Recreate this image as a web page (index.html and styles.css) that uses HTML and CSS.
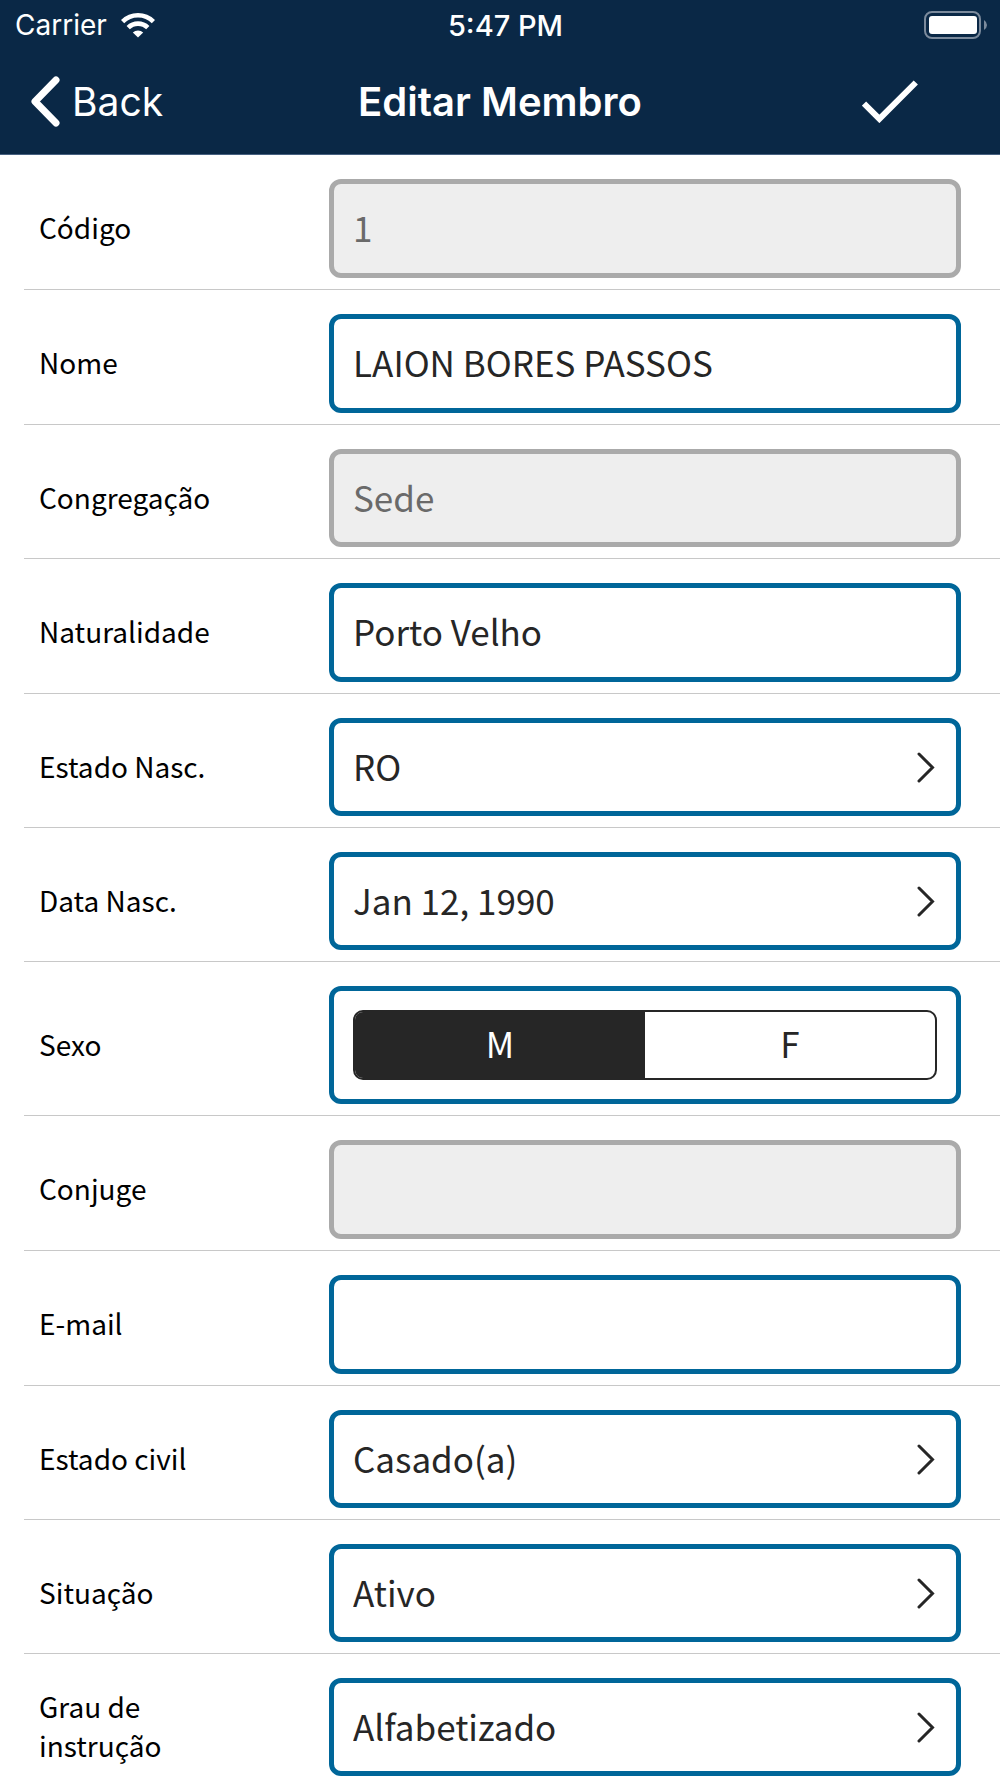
FILE: index.html
```html
<!DOCTYPE html>
<html lang="pt-BR">
<head>
<meta charset="utf-8">
<meta name="viewport" content="width=device-width, initial-scale=1">
<title>Editar Membro</title>
<link rel="stylesheet" href="styles.css">
</head>
<body>
<header class="header">
  <div class="status">
    <div class="carrier">
      <span>Carrier</span>
      <svg class="wifi" viewBox="0 0 34 25" aria-hidden="true">
        <g fill="none" stroke="#fff" stroke-width="4.6">
          <path d="M1.6 8.6A22 22 0 0 1 32.4 8.6"/>
          <path d="M7.2 14.6A14 14 0 0 1 26.8 14.6"/>
        </g>
        <path fill="#fff" d="M17 24.6 11.800 19.500A7.500 7.500 0 0 1 22.200 19.500Z"/>
      </svg>
    </div>
    <time class="clock">5:47 PM</time>
    <svg class="battery" viewBox="0 0 64 28" aria-label="Bateria cheia" role="img">
      <rect x="1" y="1" width="55" height="26" rx="7" fill="none" stroke="#7b8a9c" stroke-width="2"/>
      <rect x="5" y="5" width="48" height="18" rx="3" fill="#fff"/>
      <path d="M60 9q3 2 3 5t-3 5z" fill="#7b8a9c"/>
    </svg>
  </div>
  <nav class="nav">
    <a class="back" href="#">
      <svg class="back-icon" viewBox="0 0 30 51" aria-hidden="true"><path d="M26 4 5 25.500 26 47" fill="none" stroke="#fff" stroke-width="7" stroke-linecap="round" stroke-linejoin="round"/></svg>
      <span>Back</span>
    </a>
    <h1 class="title">Editar Membro</h1>
    <button class="save" type="submit" form="member" aria-label="Salvar">
      <svg class="save-icon" viewBox="0 0 56 43" aria-hidden="true"><path d="M2 23.500 17.400 38.900 53.800 2.500" fill="none" stroke="#fff" stroke-width="6"/></svg>
    </button>
  </nav>
</header>
<main class="content">
  <form class="form" id="member">
    <div class="row"><label class="label" for="codigo">Código</label><input class="field" id="codigo" value="1" disabled></div>
    <div class="row"><label class="label" for="nome">Nome</label><input class="field" id="nome" value="LAION BORES PASSOS"></div>
    <div class="row"><label class="label" for="congregacao">Congregação</label><select class="field field-pick" id="congregacao" disabled><option>Sede</option></select></div>
    <div class="row"><label class="label" for="naturalidade">Naturalidade</label><input class="field" id="naturalidade" value="Porto Velho"></div>
    <div class="row"><label class="label" for="estado">Estado Nasc.</label>
      <div class="picker"><select class="field field-pick" id="estado"><option>RO</option></select><svg class="chevron" viewBox="0 0 18 31" aria-hidden="true"><path d="M2 2 15.500 15.500 2 29"/></svg></div></div>
    <div class="row"><label class="label" for="data">Data Nasc.</label>
      <div class="picker"><button class="field field-pick" id="data" type="button">Jan 12, 1990</button><svg class="chevron" viewBox="0 0 18 31" aria-hidden="true"><path d="M2 2 15.500 15.500 2 29"/></svg></div></div>
    <div class="row" role="radiogroup" aria-labelledby="sexo"><span class="label" id="sexo">Sexo</span>
      <div class="field segment-box"><div class="segment">
        <input class="segment-input" type="radio" name="sexo" id="sexo-m" checked><label class="segment-item" for="sexo-m">M</label>
        <input class="segment-input" type="radio" name="sexo" id="sexo-f"><label class="segment-item" for="sexo-f">F</label>
      </div></div></div>
    <div class="row"><label class="label" for="conjuge">Conjuge</label><input class="field" id="conjuge" disabled></div>
    <div class="row"><label class="label" for="email">E-mail</label><input class="field" id="email" type="email"></div>
    <div class="row"><label class="label" for="civil">Estado civil</label>
      <div class="picker"><select class="field field-pick" id="civil"><option>Casado(a)</option></select><svg class="chevron" viewBox="0 0 18 31" aria-hidden="true"><path d="M2 2 15.500 15.500 2 29"/></svg></div></div>
    <div class="row"><label class="label" for="situacao">Situação</label>
      <div class="picker"><select class="field field-pick" id="situacao"><option>Ativo</option></select><svg class="chevron" viewBox="0 0 18 31" aria-hidden="true"><path d="M2 2 15.500 15.500 2 29"/></svg></div></div>
    <div class="row"><label class="label" for="grau">Grau de instrução</label>
      <div class="picker"><select class="field field-pick" id="grau"><option>Alfabetizado</option></select><svg class="chevron" viewBox="0 0 18 31" aria-hidden="true"><path d="M2 2 15.500 15.500 2 29"/></svg></div></div>
  </form>
</main>
</body>
</html>
```
FILE: styles.css
```css
* { box-sizing: border-box; }

body {
  display: flex;
  flex-direction: column;
  height: 100vh;
  margin: 0;
  background: #fff;
  color: #000;
  font-family: "Noto Sans CJK SC", "Noto Sans", sans-serif;
}

/* Header */
.header {
  flex: none;
  background: #0a2846;
  border-bottom: 1px solid #466080;
  color: #fff;
  font-family: Inter, Roboto, sans-serif;
}

.status,
.nav {
  display: grid;
  grid-template-columns: 1fr auto 1fr;
  align-items: center;
}

.status {
  height: 50px;
  padding: 0 4px 0 15px;
  font-size: 28px;
}

.carrier { display: flex; align-items: center; gap: 14px; }
.wifi { width: 34px; height: 25px; }
.clock { font-size: 29px; font-weight: 500; }
.battery { width: 64px; height: 28px; margin-right: 8px; justify-self: end; }

.nav {
  height: 104px;
  padding: 0 30px 2px;
  font-size: 39px;
}

.back {
  display: flex;
  align-items: center;
  gap: 12px;
  color: inherit;
  text-decoration: none;
}

.back-icon { width: 30px; height: 51px; }
.title { margin: 0; font-size: 40px; font-weight: 600; }

.save {
  justify-self: end;
  margin-right: 52px;
  padding: 0;
  border: 0;
  background: none;
  line-height: 0;
}

.save-icon { width: 56px; height: 43px; }

/* Form rows */
.content {
  flex: 1;
  min-height: 0;
  overflow-y: auto;
  scrollbar-width: none;
}

.form { padding-left: 24px; }

.row {
  display: grid;
  grid-template-columns: 290px 1fr;
  align-items: center;
  padding: 24px 39px 11px 15px;
  border-bottom: 1px solid #c8c8c8;
}

.label {
  max-width: 200px;
  padding-bottom: 2px;
  font-size: 28px;
  line-height: 39px;
}

.field {
  width: 100%;
  height: 99px;
  margin: 0;
  padding: 0 19px 4px;
  border: 5px solid #006699;
  border-radius: 12px;
  background: #fff;
  color: #262626;
  font-family: inherit;
  font-size: 35px;
  text-align: left;
  appearance: none;
  outline: 0;
}

.field:disabled {
  border-color: #aaa;
  background: #eee;
  color: #6a6a6a;
  opacity: 1;
}

.field-pick { height: 98px; }

.picker { display: grid; align-items: center; }
.picker > * { grid-area: 1 / 1; }

.chevron {
  width: 18px;
  height: 31px;
  margin-right: 26px;
  justify-self: end;
  fill: none;
  stroke: #262626;
  stroke-width: 3;
  stroke-linecap: round;
  pointer-events: none;
}

/* Segmented control */
.segment-box { height: auto; padding: 19px; }

.segment {
  display: flex;
  height: 70px;
  border: 2px solid #262626;
  border-radius: 10px;
  overflow: hidden;
}

.segment-input {
  appearance: none;
  width: 0;
  height: 0;
  margin: 0;
}

.segment-item {
  flex: 1;
  padding-bottom: 4px;
  line-height: 62px;
  text-align: center;
}

.segment-input:checked + .segment-item {
  background: #262626;
  color: #fff;
}
```
